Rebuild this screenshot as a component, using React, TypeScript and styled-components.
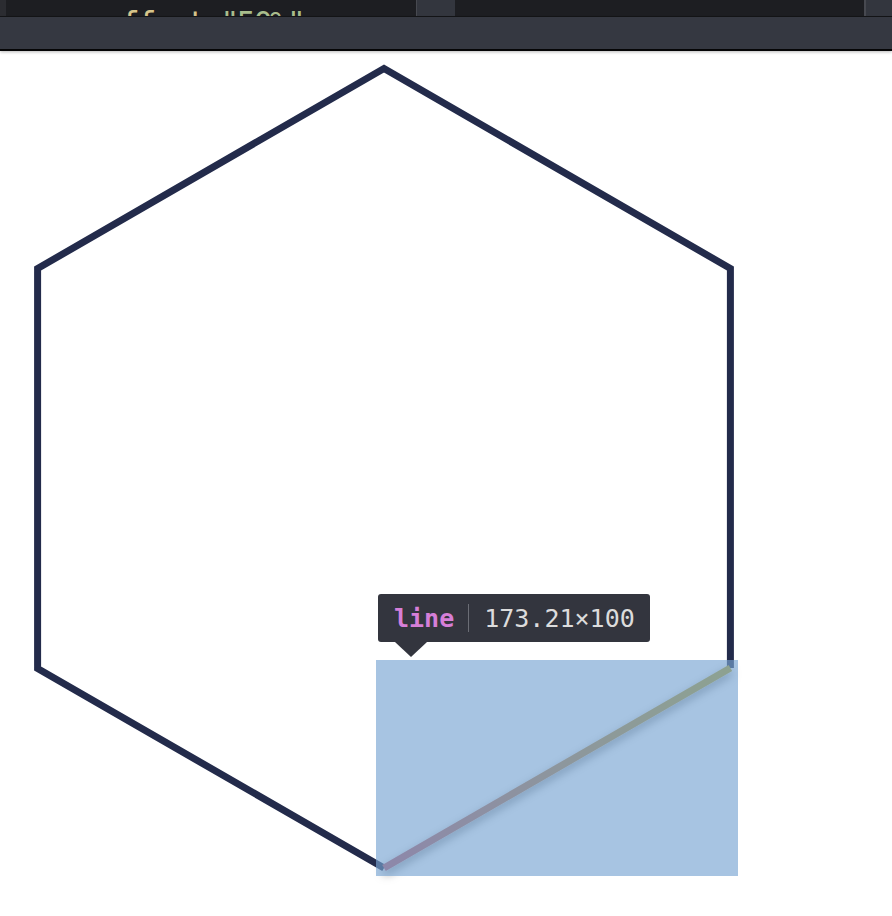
import React from "react";
import styled, { createGlobalStyle } from "styled-components";

const GlobalStyle = createGlobalStyle`
  html, body { margin: 0; padding: 0; background: #ffffff; }
  body { width: 892px; height: 916px; overflow: hidden; font-family: "DejaVu Sans", sans-serif; }
`;

const Page = styled.div`
  display: flex;
  flex-direction: column;
  width: 892px;
  height: 916px;
`;

const EditorStrip = styled.div`
  display: flex;
  height: 16px;
  border-bottom: 1px solid #141518;
  background: #1d1e22;
`;

const Gutter = styled.div`
  width: 6px;
  background: #2b2c31;
`;

const CodePane = styled.div<{ $width?: number }>`
  ${(p) => (p.$width ? `flex: 0 0 ${p.$width}px;` : "flex: 1;")}
  background: #1d1e22;
  overflow: hidden;
  position: relative;
`;

const CodeLine = styled.div`
  font-family: "DejaVu Sans Mono", monospace;
  font-size: 32px;
  letter-spacing: -2.66px;
  line-height: 32px;
  white-space: pre;
  padding: 6.5px 0 0 98px;
`;

const Attr = styled.span`
  color: #d6c48a;
`;
const Punc = styled.span`
  color: #c9ccd3;
`;
const Str = styled.span`
  color: #a9bd8c;
`;

const Splitter = styled.div<{ $width: number; $edge: number }>`
  flex: 0 0 ${(p) => p.$width}px;
  box-sizing: border-box;
  background: #33363e;
  border-left: ${(p) => p.$edge}px solid #474950;
`;

const Toolbar = styled.div`
  position: relative;
  z-index: 1;
  height: 32px;
  background: #353841;
  border-bottom: 2px solid #050506;
  box-shadow: 0 1px 3px rgba(0, 0, 0, 0.28);
`;

const Canvas = styled.div`
  position: relative;
  flex: 1;
  background: #ffffff;
`;

const Drawing = styled.svg`
  display: block;
`;

const Highlight = styled.div`
  position: absolute;
  left: 376px;
  top: 609px;
  width: 362px;
  height: 216px;
  background: rgba(120, 165, 210, 0.655);
`;

const Tooltip = styled.div`
  position: absolute;
  left: 378px;
  top: 543px;
  height: 48px;
  box-sizing: border-box;
  display: flex;
  align-items: center;
  padding: 0 15px 0 16px;
  background: #33353e;
  border-radius: 3px;
  font-family: "DejaVu Sans Mono", monospace;
  font-size: 25px;
  white-space: nowrap;

  &::after {
    content: "";
    position: absolute;
    left: 17px;
    bottom: -15px;
    border-left: 16px solid transparent;
    border-right: 16px solid transparent;
    border-top: 15px solid #33353e;
  }
`;

const TagName = styled.span`
  color: #d67fd8;
  font-weight: bold;
`;

const Divider = styled.span`
  width: 1px;
  height: 28px;
  margin: 0 15px 0 14px;
  background: #6b6d75;
`;

const Size = styled.span`
  color: #dcdcdc;
`;

export default function App() {
  const top = [384, 68.5];
  const ur = [730.4, 268.5];
  const lr = [730.4, 668];
  const bot = [384, 868];
  const ll = [37.6, 668.5];
  const ul = [37.6, 268.5];
  const outline = [lr, ur, top, ul, ll, bot]
    .map((p, i) => `${i === 0 ? "M" : "L"} ${p[0]} ${p[1]}`)
    .join(" ");
  return (
    <>
      <GlobalStyle />
      <Page>
        <EditorStrip>
          <Gutter />
          <CodePane $width={410}>
            <CodeLine>
              <Attr>offset</Attr>
              <Punc>=</Punc>
              <Str>"50%"</Str>
            </CodeLine>
          </CodePane>
          <Splitter $width={39} $edge={1} />
          <CodePane $width={409} />
          <Splitter $width={28} $edge={2} />
        </EditorStrip>
        <Toolbar />
        <Canvas>
          <Drawing width="892" height="865" viewBox="0 51 892 865">
            <defs>
              <linearGradient
                id="lineGrad"
                gradientUnits="userSpaceOnUse"
                x1="384"
                y1="868"
                x2="730.4"
                y2="668"
              >
                <stop offset="0%" stopColor="#b4505e" />
                <stop offset="50%" stopColor="#b57a38" />
                <stop offset="100%" stopColor="#b49c18" />
              </linearGradient>
              <filter id="lineShadow" x="-20%" y="-50%" width="140%" height="200%">
                <feDropShadow dx="0" dy="4" stdDeviation="5" floodColor="#000" floodOpacity="0.5" />
              </filter>
            </defs>
            <path d={outline} stroke="#232b4b" strokeWidth="7" fill="none" strokeLinejoin="miter" />
            <line
              x1={bot[0]}
              y1={bot[1]}
              x2={lr[0]}
              y2={lr[1]}
              stroke="url(#lineGrad)"
              strokeWidth="7"
              filter="url(#lineShadow)"
            />
          </Drawing>
          <Highlight />
          <Tooltip>
            <TagName>line</TagName>
            <Divider />
            <Size>173.21×100</Size>
          </Tooltip>
        </Canvas>
      </Page>
    </>
  );
}
